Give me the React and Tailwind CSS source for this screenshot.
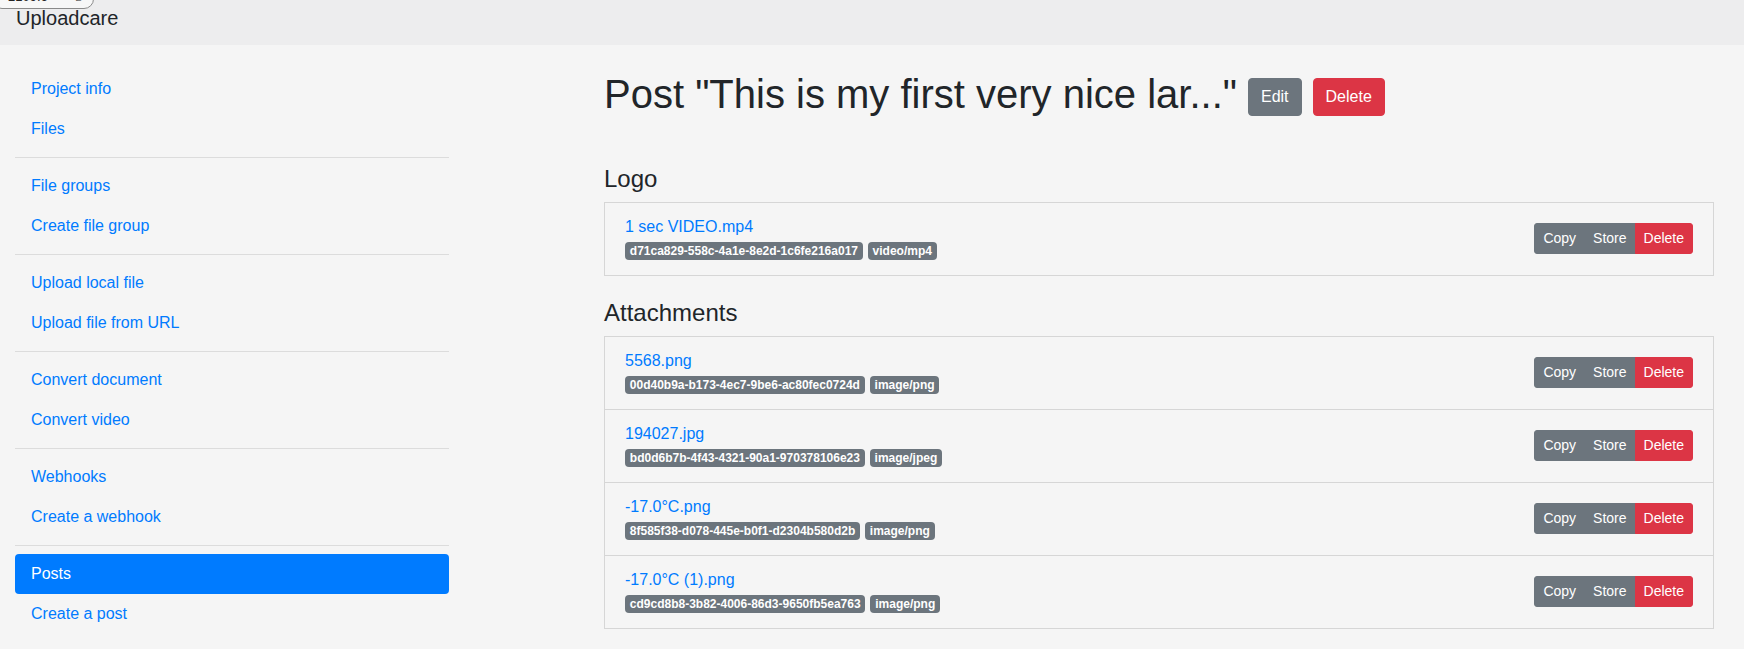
import React from "react";

const navGroups = [
  ["Project info", "Files"],
  ["File groups", "Create file group"],
  ["Upload local file", "Upload file from URL"],
  ["Convert document", "Convert video"],
  ["Webhooks", "Create a webhook"],
  ["Posts", "Create a post"],
];

const logoFiles = [
  { name: "1 sec VIDEO.mp4", uuid: "d71ca829-558c-4a1e-8e2d-1c6fe216a017", mime: "video/mp4" },
];

const attachments = [
  { name: "5568.png", uuid: "00d40b9a-b173-4ec7-9be6-ac80fec0724d", mime: "image/png" },
  { name: "194027.jpg", uuid: "bd0d6b7b-4f43-4321-90a1-970378106e23", mime: "image/jpeg" },
  { name: "-17.0°C.png", uuid: "8f585f38-d078-445e-b0f1-d2304b580d2b", mime: "image/png" },
  { name: "-17.0°C (1).png", uuid: "cd9cd8b8-3b82-4006-86d3-9650fb5ea763", mime: "image/png" },
];

function Badge({ children }) {
  return (
    <span className="inline-block rounded-[4px] bg-[#6c757d] px-[4.8px] py-[3px] text-[12px] font-bold leading-[12px] text-white">
      {children}
    </span>
  );
}

function FileItem({ file, first }) {
  return (
    <div
      className={
        "flex items-center justify-between px-5 py-3 " +
        (first ? "" : "border-t border-black/[0.125]")
      }
    >
      <div>
        <a className="block text-base leading-6 text-[#007bff]">{file.name}</a>
        <div className="flex h-6 items-center gap-[5px]">
          <Badge>{file.uuid}</Badge>
          <Badge>{file.mime}</Badge>
        </div>
      </div>
      <div className="flex text-sm leading-[21px] text-white">
        <button className="rounded-l-[3px] border border-[#6c757d] bg-[#6c757d] px-2 py-1">Copy</button>
        <button className="-ml-px border border-[#6c757d] bg-[#6c757d] px-2 py-1">Store</button>
        <button className="-ml-px rounded-r-[3px] border border-[#dc3545] bg-[#dc3545] px-2 py-1">Delete</button>
      </div>
    </div>
  );
}

export default function App() {
  return (
    <div className="relative min-h-[649px] overflow-hidden bg-[#f5f5f5] font-['Liberation_Sans',Arial,sans-serif] text-[#212529]">
      <div className="absolute left-[-8px] top-[-11px] z-10 flex h-[20px] w-[102px] items-start rounded-[10px] border border-[#8a8a8a] bg-[#f7f7f7] pl-[15px] text-[13px] leading-[14px] whitespace-nowrap">
        <span className="text-[#222]">2109.6</span>
        <span className="ml-[3px] text-[10px] text-[#888]">ms</span>
        <span className="ml-[5px] text-[11px] text-[#666]">×2</span>
      </div>

      <header className="h-[45px] bg-[#ededee] pl-4 pt-[3px] text-[20px] leading-[30px]">
        Uploadcare
      </header>

      <div className="flex">
        <nav className="ml-[15px] w-[434px] shrink-0 pt-[24px]">
          {navGroups.map((group, gi) => (
            <div key={gi}>
              {gi > 0 && <hr className="my-2 border-0 border-t border-black/10" />}
              {group.map((label) => {
                const active = label === "Posts";
                return (
                  <a
                    key={label}
                    className={
                      "block px-4 py-2 text-base leading-6 " +
                      (active ? "rounded-[4px] bg-[#007bff] text-white" : "text-[#007bff]")
                    }
                  >
                    {label}
                  </a>
                );
              })}
            </div>
          ))}
        </nav>

        <main className="ml-[155px] w-[1110px] shrink-0 pt-[25px]">
          <h1 className="mb-[47px] text-[40px] font-normal leading-[48px]">
            Post "This is my first very nice lar..."
            <button className="ml-[11px] inline-block rounded-[4px] border border-[#6c757d] bg-[#6c757d] px-3 py-[6px] align-middle text-base leading-6 text-white">
              Edit
            </button>
            <button className="ml-[11px] inline-block rounded-[4px] border border-[#dc3545] bg-[#dc3545] px-3 py-[6px] align-middle text-base leading-6 text-white">
              Delete
            </button>
          </h1>

          <h4 className="mb-2 text-[24px] font-normal leading-[28.8px]">Logo</h4>
          <div className="mb-[23px] border border-black/[0.125]">
            {logoFiles.map((f, i) => (
              <FileItem key={f.uuid} file={f} first={i === 0} />
            ))}
          </div>

          <h4 className="mb-2 text-[24px] font-normal leading-[28.8px]">Attachments</h4>
          <div className="border border-black/[0.125]">
            {attachments.map((f, i) => (
              <FileItem key={f.uuid} file={f} first={i === 0} />
            ))}
          </div>
        </main>
      </div>
    </div>
  );
}
